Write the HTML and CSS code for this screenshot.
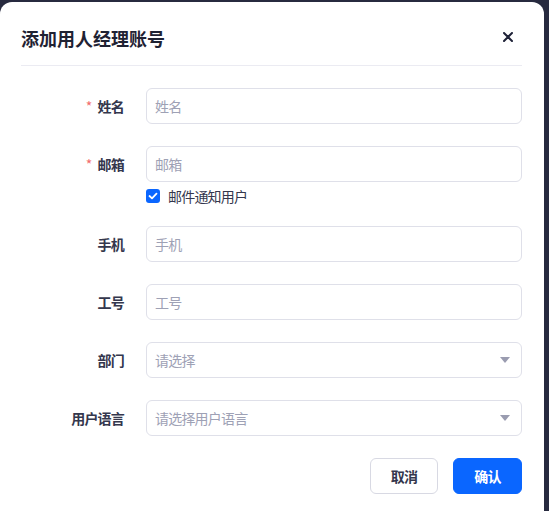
FILE: index.html
```html
<!DOCTYPE html>
<html lang="zh">
<head>
<meta charset="utf-8">
<link rel="stylesheet" href="styles.css">
</head>
<body>
<div class="modal">
  <div class="header">
    <span class="title">添加用人经理账号</span>
    <span class="close">
      <svg width="10" height="10" viewBox="0 0 10 10"><path d="M1 1L9 9M9 1L1 9" stroke="#1f2238" stroke-width="2" stroke-linecap="round"/></svg>
    </span>
  </div>
  <div class="form">
    <div class="row">
      <div class="label"><span class="req">*</span>姓名</div>
      <div class="control"><div class="input">姓名</div></div>
    </div>
    <div class="row">
      <div class="label"><span class="req">*</span>邮箱</div>
      <div class="control">
        <div class="input">邮箱</div>
        <div class="check">
          <span class="box"><svg width="10" height="8" viewBox="0 0 10 8"><path d="M1.5 4L4 6.3L8.5 1.7" stroke="#fff" stroke-width="1.8" fill="none" stroke-linecap="round" stroke-linejoin="round"/></svg></span>
          <span>邮件通知用户</span>
        </div>
      </div>
    </div>
    <div class="row">
      <div class="label">手机</div>
      <div class="control"><div class="input">手机</div></div>
    </div>
    <div class="row">
      <div class="label">工号</div>
      <div class="control"><div class="input">工号</div></div>
    </div>
    <div class="row">
      <div class="label">部门</div>
      <div class="control"><div class="input select">请选择<span class="arrow"></span></div></div>
    </div>
    <div class="row">
      <div class="label">用户语言</div>
      <div class="control"><div class="input select">请选择用户语言<span class="arrow"></span></div></div>
    </div>
  </div>
  <div class="footer">
    <button class="btn cancel">取消</button>
    <button class="btn ok">确认</button>
  </div>
</div>
</body>
</html>
```
FILE: styles.css
```css
html, body {
  margin: 0;
  padding: 0;
  height: 100%;
  overflow: hidden;
}
body {
  background: #272a3f;
  font-family: "Noto Sans CJK SC", "Noto Sans", sans-serif;
  padding-top: 2px;
  box-sizing: border-box;
}
.modal {
  width: 544px;
  height: 540px;
  background: #fff;
  border-radius: 12px;
  box-sizing: border-box;
  padding: 0 22px 0 21px;
}
.header {
  display: flex;
  align-items: center;
  justify-content: space-between;
  padding: 24px 0 15px;
  border-bottom: 1px solid #ebebf2;
}
.title {
  font-size: 18px;
  line-height: 24px;
  font-weight: 700;
  color: #1f2233;
}
.close {
  display: flex;
  margin-right: 9px;
  margin-top: -2px;
}
.form {
  padding-top: 22px;
  display: flex;
  flex-direction: column;
  gap: 22px;
}
.row {
  display: flex;
  align-items: flex-start;
  gap: 22px;
}
.label {
  width: 103px;
  flex: none;
  text-align: right;
  font-size: 14px;
  letter-spacing: -0.8px;
  line-height: 36px;
  font-weight: 700;
  color: #34374d;
}
.req {
  color: #f26d6d;
  font-weight: 400;
  margin-right: 6px;
}
.control {
  flex: 1;
}
.input {
  height: 36px;
  box-sizing: border-box;
  border: 1px solid #dfe0e9;
  border-radius: 6px;
  padding: 0 8px;
  font-size: 14px;
  letter-spacing: -0.8px;
  line-height: 34px;
  color: #9ea1b5;
  display: flex;
  align-items: center;
}
.select {
  justify-content: space-between;
}
.arrow {
  width: 0;
  height: 0;
  border-left: 5px solid transparent;
  border-right: 5px solid transparent;
  border-top: 6px solid #9a9cb0;
  margin-right: 3px;
}
.check {
  margin-top: 6px;
  display: flex;
  align-items: center;
  gap: 8px;
  font-size: 14px;
  letter-spacing: -0.8px;
  line-height: 16px;
  color: #34374d;
}
.box {
  width: 14px;
  height: 14px;
  border-radius: 3px;
  background: #0a66ff;
  display: flex;
  align-items: center;
  justify-content: center;
}
.footer {
  display: flex;
  justify-content: flex-end;
  gap: 15px;
  padding-top: 22px;
}
.btn {
  height: 36px;
  border-radius: 6px;
  font-family: inherit;
  font-size: 14px;
  letter-spacing: -0.8px;
  font-weight: 700;
  padding: 0;
  cursor: pointer;
}
.cancel {
  width: 68px;
  background: #fff;
  border: 1px solid #d8d9e3;
  color: #34374d;
}
.ok {
  width: 69px;
  background: #0a66ff;
  border: 1px solid #0a66ff;
  color: #fff;
}
```
